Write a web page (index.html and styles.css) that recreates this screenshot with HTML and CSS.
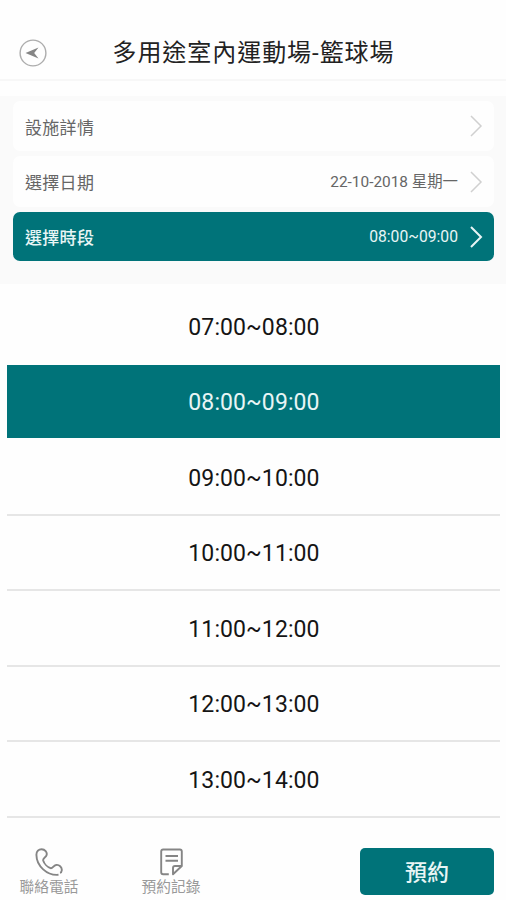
FILE: index.html
```
<!DOCTYPE html>
<html lang="zh-Hant">
<head>
  <meta charset="UTF-8" />
  <meta name="viewport" content="width=device-width, initial-scale=1.0" />
  <title>多用途室內運動場-籃球場</title>
  <link rel="stylesheet" href="styles.css">
</head>
<body>

  <header>
    <div class="back-button">
      <svg width="28" height="28" viewBox="0 0 28 28">
        <circle cx="14" cy="14" r="12.9" fill="none" stroke="#adadad" stroke-width="1.4" />
        <path d="M6.5 14 L19.5 8.5 L15.2 14 L19.5 19.5 Z" fill="#858585" />
      </svg>
    </div>
    <h1>多用途室內運動場-籃球場</h1>
  </header>

  <section class="options">
    <div class="option">
      <span class="label">設施詳情</span>
      <svg class="arrow" width="14" height="24" viewBox="0 0 14 24"><path d="M2 2 L12 12 L2 22" /></svg>
    </div>
    <div class="option date">
      <span class="label">選擇日期</span>
      <span class="value">22-10-2018 星期一</span>
      <svg class="arrow" width="14" height="24" viewBox="0 0 14 24"><path d="M2 2 L12 12 L2 22" /></svg>
    </div>
    <div class="option active">
      <span class="label">選擇時段</span>
      <span class="value">08:00~09:00</span>
      <svg class="arrow" width="14" height="24" viewBox="0 0 14 24"><path d="M2 2 L12 12 L2 22" /></svg>
    </div>
  </section>

  <ul class="time-list">
    <li>07:00~08:00</li>
    <li class="selected">08:00~09:00</li>
    <li>09:00~10:00</li>
    <li>10:00~11:00</li>
    <li>11:00~12:00</li>
    <li>12:00~13:00</li>
    <li>13:00~14:00</li>
  </ul>

  <footer>
    <div class="tool">
      <svg width="28" height="28" viewBox="0 0 28 28">
        <path d="M23.5 26.8 C12 27.8 1.5 18 1.4 6.8 C1.4 3.4 3.6 1.2 6.6 1.2 C10 1.2 12.4 4.2 11.6 7 C11 9.4 7.6 10 8.2 12.4 C9.2 15.8 12.6 19.2 15.6 20.2 C17.6 20.8 18.4 17.4 21 17 C24.2 16.4 27 19 26.8 22.2 C26.7 23.6 26 24.6 25 24.8" />
      </svg>
      <span>聯絡電話</span>
    </div>
    <div class="tool">
      <svg width="28" height="28" viewBox="0 0 28 28">
        <path d="M11.8 26.3 H6.2 Q4.2 26.3 4.2 24.3 V3.5 Q4.2 1.5 6.2 1.5 H22.8 Q24.8 1.5 24.8 3.5 V18 L16 26.3 V20 Q16 18 18 18 H24.8 M8.5 8 H21 M8.5 12.8 H21" />
      </svg>
      <span>預約記錄</span>
    </div>
    <button class="book-btn">預約</button>
  </footer>

</body>
</html>
```
FILE: styles.css
```
* {
  box-sizing: border-box;
}

body {
  margin: 0;
  height: 900px;
  overflow: hidden;
  background-color: #fefefe;
  font-family: Roboto, 'Noto Sans CJK TC', sans-serif;
  display: flex;
  flex-direction: column;
}

header {
  height: 81px;
  padding: 26px 19px 0;
  border-bottom: 2px solid #f7f7f7;
  display: grid;
  grid-template-columns: 28px 1fr 28px;
  align-items: center;
}

.back-button {
  height: 28px;
}

h1 {
  margin: 0;
  padding: 1px 0 0 1px;
  color: #222;
  font-size: 24px;
  font-weight: 400;
  letter-spacing: 0.95px;
  line-height: 36px;
  text-align: center;
  white-space: nowrap;
}

.options {
  height: 188px;
  margin-top: 15px;
  padding: 5px 12px 0 13px;
  background-color: #fafafa;
}

.option {
  height: 50px;
  margin-bottom: 5px;
  padding: 0 11px 0 12px;
  border-radius: 7px;
  background-color: #fefefe;
  color: #666;
  display: flex;
  align-items: center;
}

.option.date {
  height: 51px;
}

.option .label {
  flex-grow: 1;
  font-size: 17px;
  letter-spacing: 0.3px;
}

.option .value {
  margin-right: 11px;
  font-size: 15.5px;
}

.option.date .value {
  margin-top: -3px;
  font-size: 15.4px;
}

.arrow {
  fill: none;
  stroke: #d0d0d0;
  stroke-width: 1.5;
}

.option.active {
  height: 49px;
  background-color: #007379;
  color: #e8f5f5;
}

.option.active .label {
  font-weight: 500;
}

.option.active .value {
  font-size: 15.7px;
}

.active .arrow {
  stroke: #e8f5f5;
  stroke-width: 2;
}

/* time slots */
.time-list {
  margin: 0;
  padding: 5px 6px 0 7px;
  list-style: none;
}

.time-list li {
  height: 75.5px;
  padding: 3px 0 0 1px;
  border-bottom: 2px solid #e6e6e6;
  color: #151515;
  font-size: 23px;
  letter-spacing: 0.1px;
  display: flex;
  align-items: center;
  justify-content: center;
}

.time-list li:first-child {
  border-bottom-color: transparent;
}

.time-list li.selected {
  border-bottom-color: transparent;
  background-color: #007379;
  background-clip: padding-box;
  color: #e8f5f5;
}

footer {
  height: 82px;
  padding: 30px 12px 0 19px;
  display: flex;
  align-items: flex-start;
}

.tool {
  width: 60px;
  margin-right: 62px;
  color: #999;
  font-size: 14.7px;
  line-height: 20px;
  text-align: center;
  white-space: nowrap;
}

.tool svg {
  display: block;
  margin: 0 auto 1px;
  fill: none;
  stroke: #858585;
  stroke-width: 1.9;
  stroke-linejoin: round;
}

.book-btn {
  width: 134px;
  height: 47px;
  margin-left: auto;
  padding: 0 0 3px;
  border: none;
  border-radius: 5px;
  background-color: #007379;
  color: #e8f5f5;
  font-family: inherit;
  font-size: 22px;
  font-weight: 500;
}
```
